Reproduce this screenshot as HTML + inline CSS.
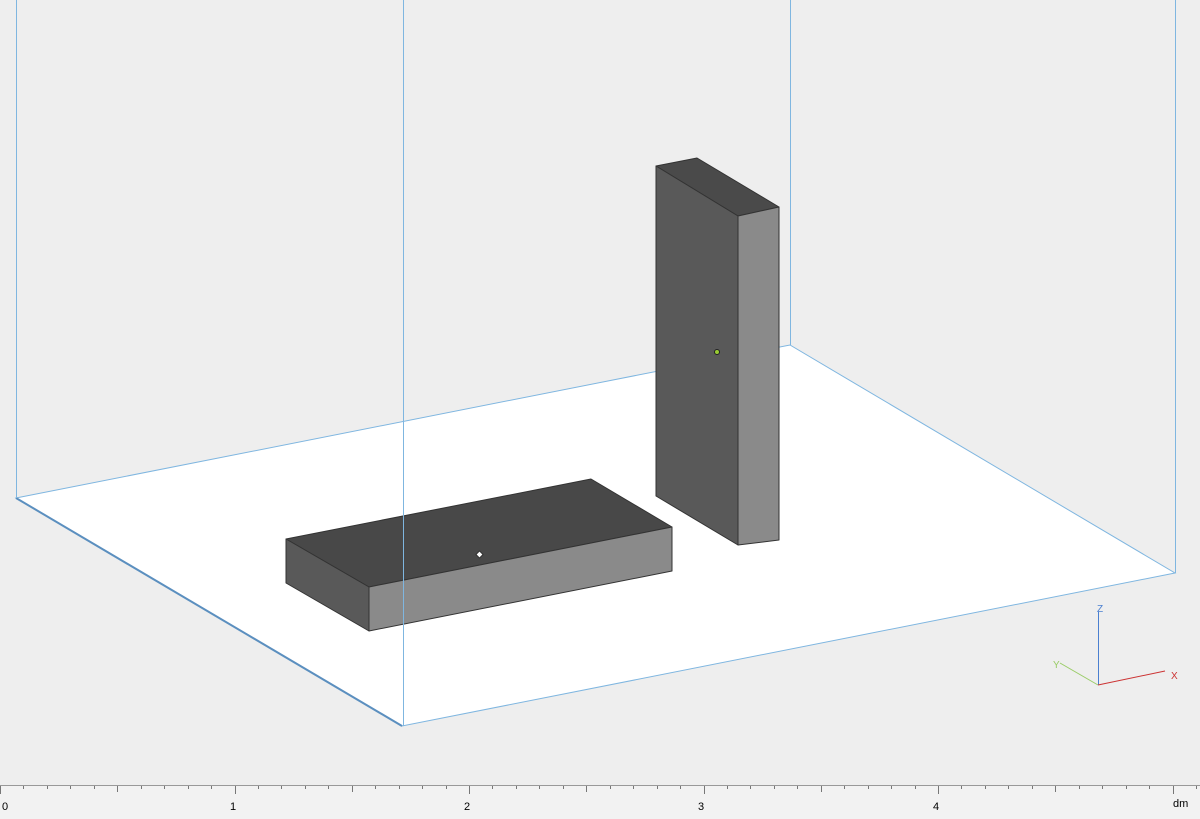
<!DOCTYPE html><html><head><style>body{margin:0;background:#eeeeee;width:1200px;height:819px;overflow:hidden;font-family:"Liberation Sans",sans-serif}</style></head><body>
<svg width="1200" height="819" style="position:absolute;left:0;top:0">
<rect width="1200" height="819" fill="#eeeeee"/>
<polygon points="16,498 790,345 1175,573 402,726" fill="#ffffff" stroke="#7fb6e0" stroke-width="1"/>
<line x1="16" y1="498" x2="402" y2="726" stroke="#5b8fbf" stroke-width="2"/>
<g stroke="#7fb6e0" stroke-width="1">
<line x1="16.5" y1="0" x2="16.5" y2="498"/>
<line x1="790.5" y1="0" x2="790.5" y2="345"/>
<line x1="1175.5" y1="0" x2="1175.5" y2="573"/>
</g>
<g stroke="#333" stroke-width="1" stroke-linejoin="round">
<polygon points="286,539 591,479 672,527 369,587" fill="#484848"/>
<polygon points="369,587 672,527 672,571 369,631" fill="#8a8a8a"/>
<polygon points="286,539 369,587 369,631 286,583" fill="#595959"/>
<polygon points="656,166 697,158 779,207 738,216" fill="#4a4a4a"/>
<polygon points="656,166 738,216 738,545 656,496" fill="#595959"/>
<polygon points="738,216 779,207 779,540 738,545" fill="#8a8a8a"/>
</g>
<line x1="403.5" y1="0" x2="403.5" y2="726" stroke="#7fb6e0" stroke-width="1"/>
<rect x="477" y="552" width="5" height="5" fill="#fff" stroke="#333" transform="rotate(45 479.5 554.5)"/>
<circle cx="717" cy="352" r="2.5" fill="#9c3" stroke="#222"/>
<line x1="1098.5" y1="685" x2="1098.5" y2="612" stroke="#4a7fd0"/>
<line x1="1098" y1="685" x2="1165" y2="671" stroke="#c33"/>
<line x1="1098" y1="685" x2="1060" y2="663" stroke="#9c6"/>
<text x="1097" y="612" font-size="10" fill="#4a7fd0">Z</text>
<text x="1171" y="679" font-size="10" fill="#c33">X</text>
<text x="1053" y="668" font-size="10" fill="#9c6">Y</text>
<rect x="0" y="786" width="1200" height="33" fill="#f2f2f2"/>
<line x1="0" y1="785.5" x2="1200" y2="785.5" stroke="#999"/>
<g stroke="#777" id="t"></g>
<text x="2" y="810" font-size="11" fill="#000">0</text>
<text x="230" y="810" font-size="11" fill="#000">1</text>
<text x="464" y="810" font-size="11" fill="#000">2</text>
<text x="698" y="810" font-size="11" fill="#000">3</text>
<text x="933" y="810" font-size="11" fill="#000">4</text>
<text x="1173" y="807" font-size="11" fill="#000">dm</text>
</svg>
<script>
var g=document.getElementById('t');var s='';
for(var i=0;i<=52;i++){var x=Math.round(i*23.45)+0.5;var h=i%10==0?8:(i%5==0?6:3);s+='<line x1="'+x+'" y1="786" x2="'+x+'" y2="'+(786+h)+'"/>';}
g.innerHTML=s;
</script>
</body></html>
